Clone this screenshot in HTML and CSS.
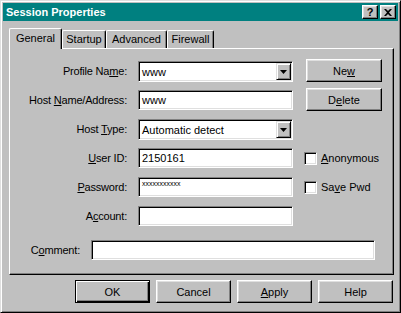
FILE: index.html
```html
<!DOCTYPE html>
<html lang="en">
  <head>
    <meta charset="UTF-8" />
    <title>Session Properties</title>
    <link rel="stylesheet" href="styles.css">
  </head>

  <body>
    <div class="window">
      <div class="titlebar">
        <span class="title">Session Properties</span>
        <div class="caption-buttons">
          <button class="cap-btn">?</button>
          <button class="cap-btn">
            <svg width="8" height="7" viewBox="0 0 8 7">
              <path d="M0 0h2l2 2 2-2h2L5 3.5 8 7H6L4 5 2 7H0l3-3.5z" fill="#000" />
            </svg>
          </button>
        </div>
      </div>

      <div class="dialog-body">
        <div class="tabs">
          <div class="tab active" style="width: 53px">General</div>
          <div class="tab" style="width: 44px">Startup</div>
          <div class="tab" style="width: 61px">Advanced</div>
          <div class="tab" style="width: 47px">Firewall</div>
        </div>

        <div class="panel">
          <div class="form">
            <label class="label">Profile Na<u>m</u>e:</label>
            <div class="combo">
              <span class="value">www</span>
              <span class="arrow">
                <svg width="7" height="4" viewBox="0 0 7 4"><path d="M0 0h7L3.5 4z" fill="#000" /></svg>
              </span>
            </div>
            <button class="btn side-btn">Ne<u>w</u></button>

            <label class="label">Host <u>N</u>ame/Address:</label>
            <div class="field"><span class="value">www</span></div>
            <button class="btn side-btn">D<u>e</u>lete</button>

            <label class="label">Host <u>T</u>ype:</label>
            <div class="combo">
              <span class="value">Automatic detect</span>
              <span class="arrow">
                <svg width="7" height="4" viewBox="0 0 7 4"><path d="M0 0h7L3.5 4z" fill="#000" /></svg>
              </span>
            </div>
            <div></div>

            <label class="label"><u>U</u>ser ID:</label>
            <div class="field"><span class="value">2150161</span></div>
            <div class="check-row">
              <span class="checkbox"></span>
              <span><u>A</u>nonymous</span>
            </div>

            <label class="label"><u>P</u>assword:</label>
            <div class="field"><span class="value secret">xxxxxxxxxxx</span></div>
            <div class="check-row">
              <span class="checkbox"></span>
              <span>Sa<u>v</u>e Pwd</span>
            </div>

            <label class="label">A<u>c</u>count:</label>
            <div class="field"></div>
            <div></div>
          </div>

          <div class="comment-row">
            <label class="label comment-label">C<u>o</u>mment:</label>
            <div class="field comment-field"></div>
          </div>
        </div>

        <div class="actions">
          <button class="btn action-btn default">OK</button>
          <button class="btn action-btn">Cancel</button>
          <button class="btn action-btn"><u>A</u>pply</button>
          <button class="btn action-btn">Help</button>
        </div>
      </div>
    </div>
  </body>
</html>
```

FILE: styles.css
```css
* {
  box-sizing: border-box;
}

body {
  margin: 0;
  background-color: #c0c0c0;
  font-family: "Liberation Sans", Arial, sans-serif;
  font-size: 11px;
  color: #000;
}

button {
  font-family: inherit;
  font-size: 11px;
  color: #000;
  padding: 0;
  cursor: pointer;
}

.window {
  width: 401px;
  height: 313px;
  padding: 2px;
  background-color: #c0c0c0;
  border: 1px solid;
  border-color: #dfdfdf #000 #000 #dfdfdf;
  box-shadow: inset 1px 1px #fff, inset -1px -1px #808080;
}

.titlebar {
  display: flex;
  justify-content: space-between;
  align-items: center;
  height: 18px;
  padding: 0 2px 0 3px;
  background-color: #008080;
  color: #fff;
}

.title {
  font-weight: bold;
  font-size: 11px;
}

.caption-buttons {
  display: flex;
  gap: 2px;
}

.cap-btn {
  display: flex;
  justify-content: center;
  align-items: center;
  width: 16px;
  height: 14px;
  font-weight: bold;
  font-size: 11px;
  line-height: 1;
  background-color: #c0c0c0;
  border: 1px solid;
  border-color: #fff #000 #000 #fff;
  box-shadow: inset -1px -1px #808080, inset 1px 1px #dfdfdf;
}

/* содержимое под заголовком */
.dialog-body {
  padding: 7px 4px 0 6px;
}

.tabs {
  display: flex;
  align-items: flex-end;
  height: 20px;
}

.tab {
  height: 18px;
  padding-top: 2px;
  text-align: center;
  background-color: #c0c0c0;
  border-top: 1px solid #fff;
  border-left: 1px solid #fff;
  border-right: 1px solid #000;
  border-radius: 2px 2px 0 0;
  box-shadow: inset -1px 0 #808080;
}

.tab.active {
  position: relative;
  z-index: 1;
  height: 21px;
  margin-bottom: -1px;
  padding-top: 3px;
}

.panel {
  height: 227px;
  padding: 12px 0 0 1px;
  border: 1px solid;
  border-color: #fff #000 #000 #fff;
  box-shadow: inset -1px -1px #808080;
}

.form {
  display: grid;
  grid-template-columns: 116px 155px 78px;
  grid-auto-rows: 20px;
  column-gap: 11px;
  row-gap: 9px;
  align-items: center;
}

.label {
  text-align: right;
  white-space: nowrap;
  letter-spacing: -0.2px;
}

.field,
.combo {
  display: flex;
  align-items: center;
  height: 20px;
  background-color: #fff;
  border: 1px solid;
  border-color: #808080 #fff #fff #808080;
  box-shadow: inset 1px 1px #000, inset -1px -1px #dfdfdf;
}

.combo {
  height: 21px;
  align-self: start;
}

.value {
  flex: 1;
  padding-left: 3px;
  white-space: nowrap;
}

.secret {
  align-self: flex-start;
  padding-top: 2px;
  font-size: 7px;
}

.arrow {
  display: flex;
  justify-content: center;
  align-items: center;
  width: 15px;
  height: 17px;
  margin-right: 1px;
  background-color: #c0c0c0;
  border: 1px solid;
  border-color: #dfdfdf #000 #000 #dfdfdf;
  box-shadow: inset 1px 1px #fff, inset -1px -1px #808080;
}

.btn {
  background-color: #c0c0c0;
  border: 1px solid;
  border-color: #fff #000 #000 #fff;
  box-shadow: inset -1px -1px #808080, inset 1px 1px #dfdfdf;
}

.side-btn {
  align-self: start;
  width: 76px;
  height: 23px;
  margin: -2px 0 0 2px;
}

.check-row {
  display: flex;
  align-items: center;
  gap: 4px;
}

.checkbox {
  width: 13px;
  height: 13px;
  background-color: #fff;
  border: 1px solid;
  border-color: #808080 #fff #fff #808080;
  box-shadow: inset 1px 1px #000, inset -1px -1px #dfdfdf;
}

.comment-row {
  display: flex;
  align-items: center;
  gap: 11px;
  margin-top: 14px;
}

.comment-label {
  width: 69px;
}

.comment-field {
  width: 284px;
}

.actions {
  display: flex;
  justify-content: flex-end;
  gap: 6px;
  margin-top: 5px;
  padding-right: 1px;
}

.action-btn {
  width: 75px;
  height: 23px;
}

.action-btn.default {
  border-color: #000;
  box-shadow: inset 1px 1px #fff, inset -1px -1px #000, inset -2px -2px #808080;
}
```
